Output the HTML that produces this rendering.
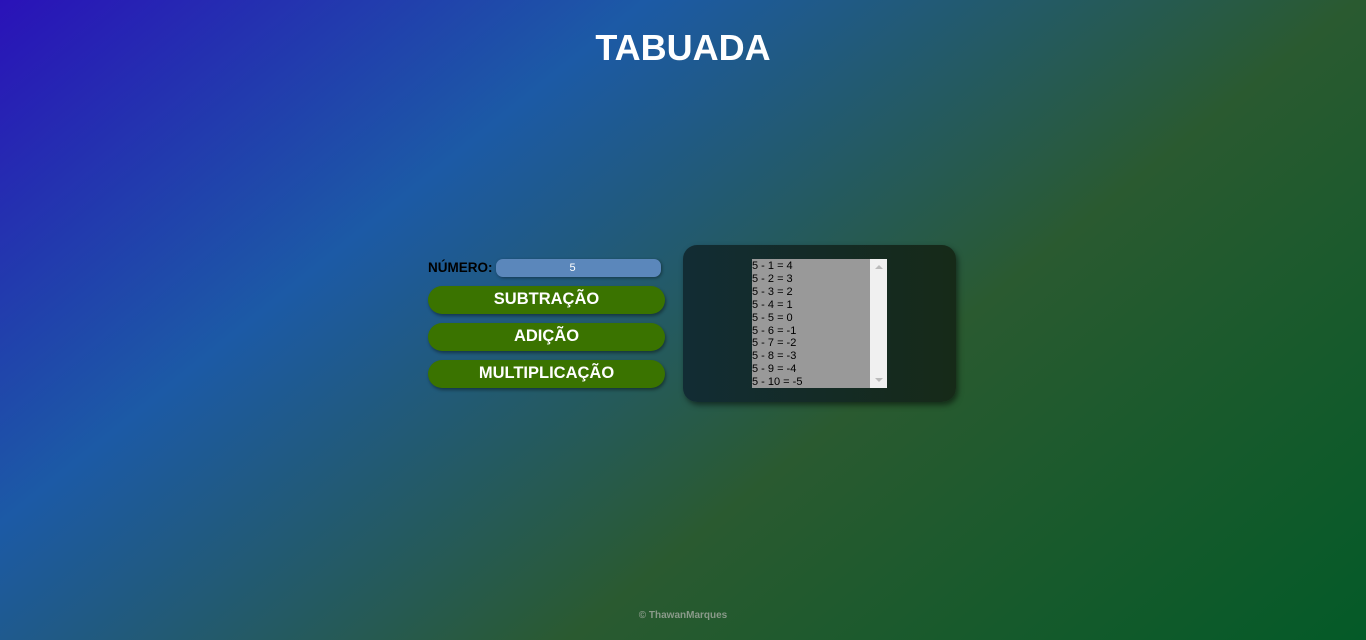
<!DOCTYPE html>
<html><head><meta charset="utf-8"><style>
html,body{margin:0;height:640px;overflow:hidden}
body{width:1366px;height:640px;position:relative;font-family:"Liberation Sans",sans-serif;
background:linear-gradient(141deg,#2a12b8 0%,#1c5aa6 30%,#2a5a30 63%,#045a28 100%);}
h1{position:absolute;top:27px;left:0;width:1366px;margin:0;text-align:center;color:#fff;font-size:36px;font-weight:bold}
.lbl{position:absolute;left:428px;top:260px;font-size:13.5px;font-weight:bold;color:#000}
.inp{position:absolute;left:496px;top:259px;width:165px;height:18px;border-radius:7px;background:#5b87bb;color:#fff;font-size:11px;text-align:center;line-height:18px;box-shadow:1px 1px 3px rgba(0,0,0,.4);text-indent:-12px}
.btn{position:absolute;left:428px;width:237px;height:28px;border-radius:14px;background:#3a7300;color:#fff;font-weight:bold;font-size:16.5px;text-align:center;line-height:27px;box-shadow:1px 2px 3px rgba(0,0,0,.4)}
.panel{position:absolute;left:683px;top:245px;width:273px;height:157px;border-radius:14px;background:linear-gradient(to right,#122c34,#162a18);box-shadow:2px 3px 6px rgba(0,0,0,.5)}
.ta{position:absolute;left:752px;top:259px;width:135px;height:129px;background:#999;overflow:hidden}
.ta pre{margin:0;padding-top:1px;font-family:"Liberation Sans",sans-serif;font-size:11px;line-height:12.9px;color:#000}
.sb{position:absolute;right:0;top:0;width:17px;height:129px;background:#f0f0f0}
.foot{position:absolute;top:610px;left:0;width:1366px;text-align:center;font-size:10px;font-weight:bold;color:#8a9a8a}
</style></head><body>
<h1>TABUADA</h1>
<div class="lbl">NÚMERO:</div>
<div class="inp">5</div>
<div class="btn" style="top:286px">SUBTRAÇÃO</div>
<div class="btn" style="top:323px">ADIÇÃO</div>
<div class="btn" style="top:360px">MULTIPLICAÇÃO</div>
<div class="panel"></div>
<div class="ta"><pre>5 - 1 = 4
5 - 2 = 3
5 - 3 = 2
5 - 4 = 1
5 - 5 = 0
5 - 6 = -1
5 - 7 = -2
5 - 8 = -3
5 - 9 = -4
5 - 10 = -5</pre><div class="sb"><div style="position:absolute;left:5px;top:6px;border:4px solid transparent;border-bottom-color:#bbb;border-top:0"></div><div style="position:absolute;left:5px;bottom:6px;border:4px solid transparent;border-top-color:#bbb;border-bottom:0"></div></div></div>
<div class="foot">© ThawanMarques</div>
</body></html>
